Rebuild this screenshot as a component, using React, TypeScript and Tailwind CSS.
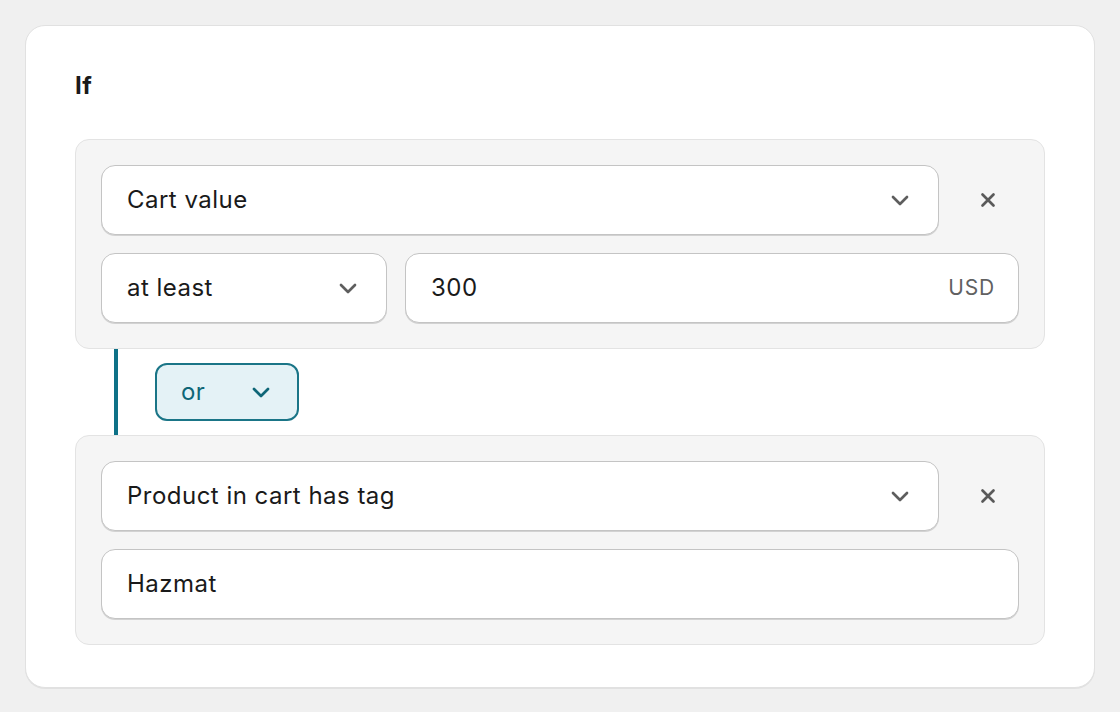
function Chevron({ className = "" }: { className?: string }) {
  return (
    <svg width="18" height="11" viewBox="0 0 18 11" fill="none" className={className}>
      <path d="M2 2l7 7 7-7" stroke="currentColor" strokeWidth="2.7" strokeLinecap="round" strokeLinejoin="round" />
    </svg>
  );
}

function CloseIcon() {
  return (
    <svg width="16" height="16" viewBox="0 0 16 16" fill="none" className="text-[#5a5a5a]">
      <path d="M2.5 2.5l11 11M13.5 2.5l-11 11" stroke="currentColor" strokeWidth="2.7" strokeLinecap="round" />
    </svg>
  );
}

const field =
  "flex h-[70px] items-center rounded-[14px] border border-[#c4c4c4] bg-white px-[25px] text-[24px] tracking-[0.02em] text-[#1a1a1a] shadow-[0_1px_0_rgba(0,0,0,0.14)]";

function Select({ value, className = "" }: { value: string; className?: string }) {
  return (
    <div className={`${field} justify-between pr-[29px] ${className}`}>
      <span>{value}</span>
      <Chevron className="text-[#5e5e5e]" />
    </div>
  );
}

function RemoveButton() {
  return (
    <button className="flex h-[70px] w-[62px] shrink-0 items-center justify-center">
      <CloseIcon />
    </button>
  );
}

function Group({ children }: { children: React.ReactNode }) {
  return (
    <div className="flex flex-col gap-[18px] rounded-[14px] border border-[#e3e3e3] bg-[#f5f5f5] p-[25px]">
      {children}
    </div>
  );
}

export default function App() {
  return (
    <main className="min-h-screen bg-[#f0f0f0] p-[25px]" style={{ fontFamily: "Inter, 'Liberation Sans', sans-serif" }}>
      <div className="flex h-[663px] w-[1070px] flex-col rounded-[20px] border border-[#e1e1e1] bg-white px-[49px] pt-[44px] shadow-[0_1px_0_rgba(0,0,0,0.06)]">
        <h2 className="text-[24px] leading-[32px] font-bold tracking-[0.02em] text-[#1a1a1a]">If</h2>

        <div className="mt-[37px]">
          <Group>
            <div className="flex gap-[18px]">
              <Select value="Cart value" className="flex-1" />
              <RemoveButton />
            </div>
            <div className="flex gap-[18px]">
              <Select value="at least" className="w-[286px]" />
              <div className={`${field} flex-1 justify-between pr-[23px]`}>
                <span>300</span>
                <span className="text-[21px] tracking-[0.04em] text-[#616161]">USD</span>
              </div>
            </div>
          </Group>

          <div className="flex h-[86px] items-center pl-[39px]">
            <div className="h-full w-[4px] bg-[#0e7187]" />
            <button className="ml-[37px] flex h-[58px] w-[144px] items-center justify-between rounded-[12px] border-2 border-[#1a7587] bg-[#e4f2f6] pl-[24px] pr-[27px] text-[24px] tracking-[0.02em] text-[#0e6677]">
              <span>or</span>
              <Chevron className="text-[#0e6677]" />
            </button>
          </div>

          <Group>
            <div className="flex gap-[18px]">
              <Select value="Product in cart has tag" className="flex-1" />
              <RemoveButton />
            </div>
            <div className={field}>
              <span>Hazmat</span>
            </div>
          </Group>
        </div>
      </div>
    </main>
  );
}
